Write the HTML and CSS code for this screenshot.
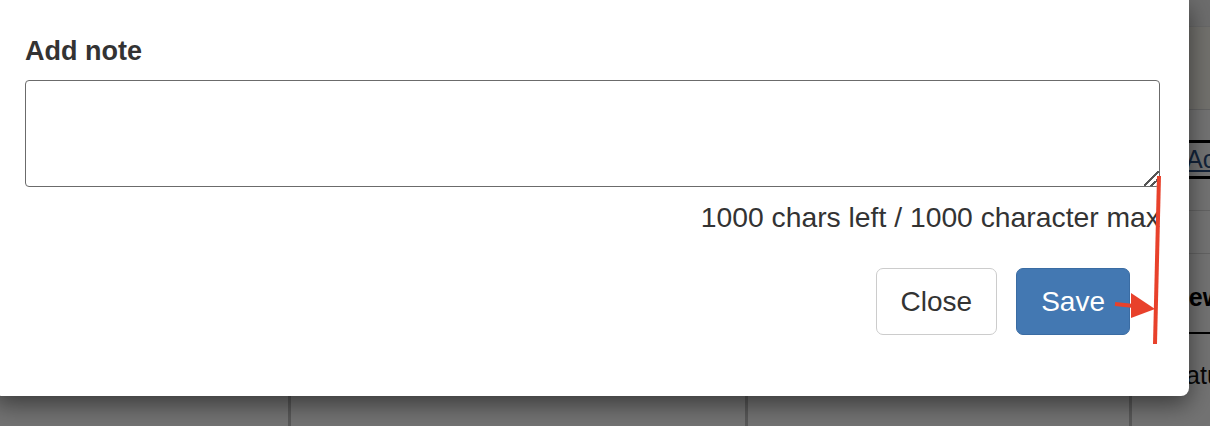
FILE: index.html
```html
<!DOCTYPE html>
<html lang="en">
<head>
<meta charset="utf-8">
<title>Add note</title>
<link rel="stylesheet" href="styles.css">
</head>
<body>
<div class="screen">
  <!-- page underneath the dialog -->
  <div class="sheet">
    <div class="row row-head"></div>
    <div class="row row-tint"></div>
    <div class="row row-plain row-rule-bold"></div>
    <div class="row row-link row-rule-bold">
      <div class="cell"></div><div class="cell"></div><div class="cell"></div>
      <div class="cell"><a href="#" class="link">Add Action</a></div>
    </div>
    <div class="row row-short"></div>
    <div class="row row-mid"></div>
    <div class="row row-title row-rule-dark">
      <div class="cell"></div><div class="cell"></div><div class="cell"></div>
      <div class="cell"><strong>Review</strong></div>
    </div>
    <div class="row row-cols">
      <div class="cell col"></div><div class="cell col"></div><div class="cell col"></div>
      <div class="cell"><span class="sig">Signature</span></div>
    </div>
  </div>

  <div class="backdrop"></div>

  <div class="modal">
    <h4 class="modal-title">Add note</h4>
    <textarea class="note-input" aria-label="Note"></textarea>
    <p class="counter">1000 chars left / 1000 character max</p>
    <div class="modal-footer">
      <button type="button" class="btn btn-default">Close</button>
      <button type="button" class="btn btn-primary">Save</button>
    </div>
  </div>

  <!-- red markup drawn on top -->
  <svg class="markup" width="1210" height="426" viewBox="0 0 1210 426">
    <line x1="1159" y1="176" x2="1155" y2="344" stroke="#e8412b" stroke-width="4"/>
    <line x1="1115" y1="304" x2="1134" y2="306" stroke="#e8412b" stroke-width="4"/>
    <polygon points="1131,293 1155,309 1131,318" fill="#e8412b"/>
  </svg>
</div>
</body>
</html>
```

FILE: styles.css
```css
* {
  box-sizing: border-box;
}

html,
body {
  margin: 0;
  height: 100%;
}

body {
  font-family: "Liberation Sans", Arial, sans-serif;
  color: #333;
  background: #fff;
  overflow: hidden;
}

.screen {
  position: relative;
  width: 1210px;
  height: 426px;
  overflow: hidden;
}

/* ---------- page underneath ---------- */
.sheet {
  display: flex;
  flex-direction: column;
  height: 100%;
  font-size: 25px;
  color: #000;
}

.row {
  display: grid;
  grid-template-columns: 291px 457px 384px 1fr;
  flex: none;
}

.cell {
  padding-left: 4px;
  display: flex;
  align-items: center;
  white-space: nowrap;
  overflow: hidden;
}

.row-head {
  height: 27px;
  background: #f2f2f2;
  border-bottom: 1px solid #e6e6e6;
}

.row-tint {
  height: 83px;
  background: #fcfaf1;
  border-bottom: 1px solid #dcdcdc;
}

.row-plain {
  height: 33px;
}

.row-rule-bold {
  border-bottom: 3px solid #000;
}

.row-link {
  height: 36px;
}

.link {
  color: #2a4f80;
  text-decoration: underline;
}

.row-short {
  height: 32px;
  border-bottom: 1px solid #dcdcdc;
}

.row-mid {
  height: 43px;
  border-bottom: 1px solid #dcdcdc;
}

.row-title {
  height: 80px;
  padding-top: 9px;
}

.row-rule-dark {
  border-bottom: 2px solid #000;
}

.row-cols {
  flex: 1;
}

.row-cols .cell {
  align-items: flex-start;
  padding-top: 27px;
}

.col {
  border-right: 3px solid #c4c4c4;
}

.sig {
  color: #111;
}

.backdrop {
  position: absolute;
  inset: 0;
  background: rgba(0, 0, 0, 0.55);
}

/* ---------- dialog ---------- */
.modal {
  position: absolute;
  left: -6px;
  top: 0;
  width: 1195px;
  height: 396px;
  background: #fff;
  border-radius: 0 0 8px 8px;
  box-shadow: 0 8px 24px rgba(0, 0, 0, 0.5);
  padding: 36px 29px 0 31px;
  display: flex;
  flex-direction: column;
}

.modal-title {
  margin: 0 0 14px;
  font-size: 27px;
  line-height: 30px;
  font-weight: bold;
  color: #333;
}

.note-input {
  display: block;
  width: 100%;
  height: 107px;
  margin: 0;
  padding: 6px 10px;
  border: 1px solid #6b6b6b;
  border-radius: 4px;
  font: inherit;
  font-size: 25px;
  resize: both;
  background: #fff;
}

.note-input::-webkit-resizer {
  background:
    linear-gradient(135deg,
      transparent 46%, #555 46%, #555 54%, transparent 54%,
      transparent 70%, #555 70%, #555 78%, transparent 78%);
}

.counter {
  margin: 11px 0 0;
  text-align: right;
  font-size: 28.3px;
  line-height: 38px;
  color: #333;
}

.modal-footer {
  display: flex;
  justify-content: flex-end;
  gap: 19px;
  margin: 32px 30px 0 0;
}

.btn {
  font-family: inherit;
  font-size: 28px;
  line-height: 35px;
  padding: 15px 24px;
  border-radius: 7px;
  border: 1px solid transparent;
  cursor: pointer;
}

.btn-default {
  background: #fff;
  color: #333;
  border-color: #cccccc;
}

.btn-primary {
  background: #4378b2;
  color: #fff;
  border-color: #3a6ca3;
}

.markup {
  position: absolute;
  left: 0;
  top: 0;
}
```
